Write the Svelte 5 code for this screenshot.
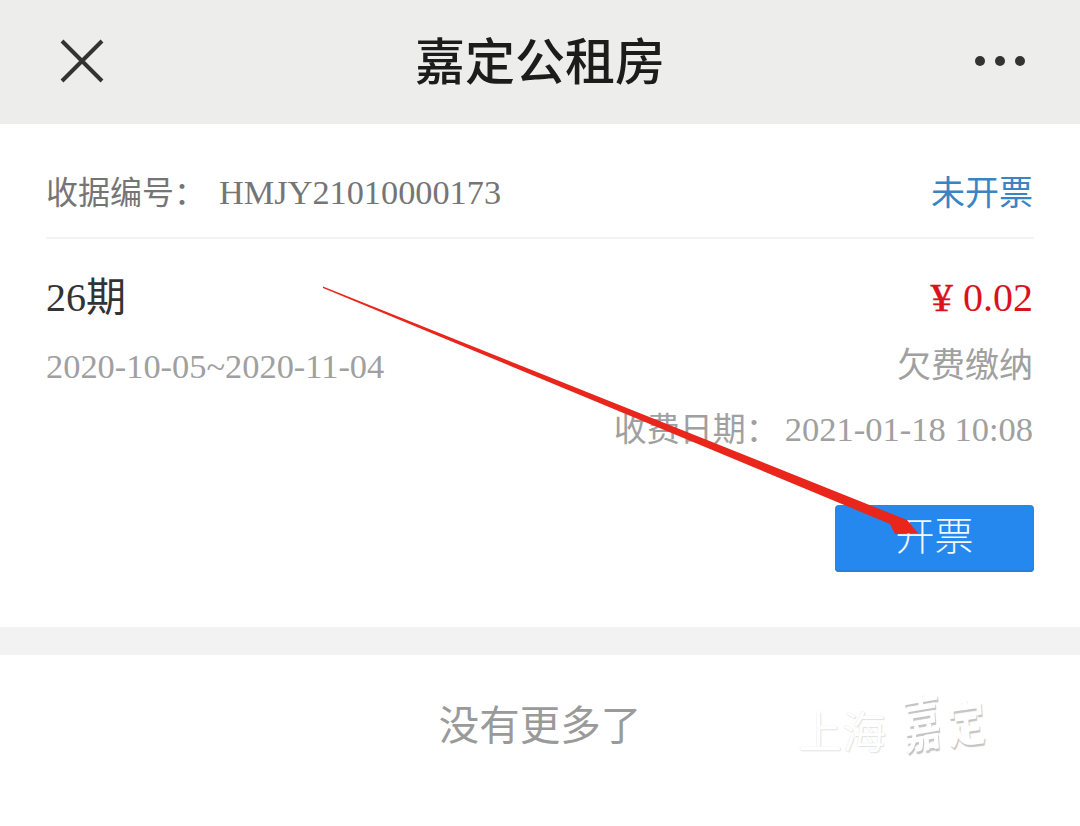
<script>
    const bill = {
        no: "HMJY21010000173",
        status: "未开票",
        period: "26期",
        amount: "0.02",
        range: "2020-10-05~2020-11-04",
        kind: "欠费缴纳",
        date: "2021-01-18 10:08",
    };
</script>

<div class="page">
    <header class="nav">
        <svg class="close" width="44" height="44" viewBox="0 0 44 44">
            <path d="M2 2 L42 42 M42 2 L2 42" stroke="#333" stroke-width="4" fill="none" />
        </svg>
        <h1>嘉定公租房</h1>
        <div class="more"><i></i><i></i><i></i></div>
    </header>

    <section class="card">
        <div class="head">
            <span class="label">收据编号：<span class="no">{bill.no}</span></span>
            <span class="status">{bill.status}</span>
        </div>
        <div class="body">
            <div class="row first">
                <span class="period">{bill.period}</span>
                <span class="amount"><span class="yen">¥</span> {bill.amount}</span>
            </div>
            <div class="row second">
                <span class="range">{bill.range}</span>
                <span>{bill.kind}</span>
            </div>
            <div class="row third">
                <span>收费日期：<span class="date">{bill.date}</span></span>
            </div>
            <div class="actions">
                <button>开票</button>
            </div>
        </div>
    </section>

    <div class="end">没有更多了</div>

    <!-- red annotation arrow drawn on top of the screenshot -->
    <svg class="arrow" width="1080" height="826" viewBox="0 0 1080 826">
        <path d="M323 286.4 L907 520 L918 533 L895 534 L890 524 L323 288 Z" fill="#e8261c" />
    </svg>
    <div class="mark">
        <span class="city">上海</span>
        <span class="town a">嘉</span>
        <span class="town b">定</span>
    </div>
</div>

<style>
    :global(body) {
        margin: 0;
        background: #fff;
    }

    .page {
        position: relative;
        width: 1080px;
        height: 826px;
        overflow: hidden;
        background: #fff;
        font-family: "Liberation Serif", "Noto Sans CJK SC", serif;
    }

    .nav {
        height: 124px;
        background: #ededec;
        display: flex;
        align-items: center;
        justify-content: space-between;
        padding: 0 55px 3px 60px;
        box-sizing: border-box;
        position: relative;
    }

    .close {
        display: block;
    }

    h1 {
        position: absolute;
        left: 0;
        right: 0;
        top: 23px;
        margin: 0;
        text-align: center;
        font-family: "Noto Sans CJK SC", sans-serif;
        font-size: 50px;
        line-height: 70px;
        font-weight: 500;
        color: #1c1c1c;
    }

    .more {
        display: flex;
        gap: 10px;
    }

    .more i {
        width: 10px;
        height: 10px;
        border-radius: 50%;
        background: #333;
    }

    .card {
        height: 503px;
        border-bottom: 28px solid #f2f2f2;
        box-sizing: content-box;
        padding: 0 46px;
    }

    .head {
        height: 115px;
        display: flex;
        align-items: flex-end;
        justify-content: space-between;
        border-bottom: 2px solid #f3f3f3;
        box-sizing: border-box;
        font-size: 32px;
        line-height: 48px;
        padding: 0 1px 20px 0;
    }

    .label {
        color: #757575;
    }

    .no {
        font-size: 34.3px;
        margin-left: 13px;
    }

    .status {
        color: #3a84c4;
        font-size: 34px;
        position: relative;
        top: 1px;
    }

    .row {
        display: flex;
        justify-content: space-between;
        padding-right: 1px;
    }

    .first {
        margin-top: 33px;
        line-height: 52px;
        font-size: 40px;
    }

    .period {
        color: #333;
    }

    .amount {
        color: #d9121f;
    }

    .yen {
        display: inline-block;
        transform: scaleX(1.12);
        transform-origin: right center;
        -webkit-text-stroke: 0.4px #d9121f;
    }

    .second {
        margin-top: 18px;
        line-height: 48px;
        font-size: 34px;
        color: #a0a0a0;
    }

    .range {
        font-size: 34.4px;
    }

    .third {
        margin-top: 15px;
        line-height: 48px;
        font-size: 33px;
        color: #a0a0a0;
        justify-content: flex-end;
    }

    .date {
        font-size: 34.5px;
        margin-left: 6px;
    }

    .actions {
        margin-top: 51px;
        display: flex;
        justify-content: flex-end;
    }

    button {
        width: 199px;
        height: 67px;
        border: 0;
        border-radius: 4px;
        background: #2488ee;
        box-shadow: inset 0 -2px 0 #2a7fd0;
        color: #f0f7ff;
        font-family: "Noto Sans CJK SC", sans-serif;
        font-size: 39px;
        font-weight: 300;
        line-height: 57px;
        padding: 0 0 10px;
    }

    .end {
        text-align: center;
        margin-top: 38px;
        line-height: 60px;
        font-family: "Noto Sans CJK SC", sans-serif;
        font-size: 40.5px;
        color: #9a9a9a;
    }

    .arrow {
        position: absolute;
        left: 0;
        top: 0;
        pointer-events: none;
    }

    .mark {
        position: absolute;
        left: 798px;
        top: 688px;
        width: 200px;
        height: 70px;
        color: #fff;
        font-family: "Noto Sans CJK SC", sans-serif;
    }

    .city {
        position: absolute;
        left: 0;
        top: 9px;
        font-size: 44px;
        line-height: 66px;
        text-shadow: 0 0 1px #d8d8d8, 1px 1px 1px #e4e4e4;
    }

    .town {
        position: absolute;
        font-size: 44px;
        line-height: 60px;
        font-weight: 700;
        text-shadow: 1px 2px 1px #c4c4c4;
    }

    .a {
        left: 102px;
        top: 1px;
        transform: scale(0.85, 1.4) rotate(-6deg);
    }

    .b {
        left: 146px;
        top: 2px;
        transform: scale(0.85, 1.15) rotate(-6deg);
    }
</style>
